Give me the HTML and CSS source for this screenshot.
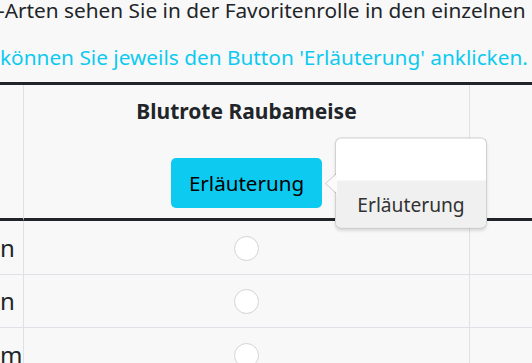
FILE: index.html
```html
<!DOCTYPE html>
<html lang="de">
<head>
    <meta charset="UTF-8">
    <meta name="viewport" content="width=device-width, initial-scale=1.0">
    <title>Favoritenrolle</title>
    <link rel="stylesheet" href="styles.css">
</head>
<body>
    <div class="page">
        <p class="lead-text">-Arten sehen Sie in der Favoritenrolle in den einzelnen</p>
        <p class="hint">können Sie jeweils den Button 'Erläuterung' anklicken.</p>

        <table class="species-table">
            <thead>
                <tr>
                    <th class="col-label"></th>
                    <th class="col-species">
                        <div class="species-name">Blutrote Raubameise</div>
                        <span class="btn-wrap">
                            <button class="btn-info">Erläuterung</button>
                            <div class="popover">
                                <div class="popover-arrow"></div>
                                <div class="popover-body"></div>
                                <div class="popover-header">Erläuterung</div>
                            </div>
                        </span>
                    </th>
                    <th class="col-rest"></th>
                </tr>
            </thead>
            <tbody>
                <tr>
                    <td class="col-label">n</td>
                    <td class="col-species"><input type="radio" name="r1" class="choice"></td>
                    <td class="col-rest"></td>
                </tr>
                <tr>
                    <td class="col-label">n</td>
                    <td class="col-species"><input type="radio" name="r2" class="choice"></td>
                    <td class="col-rest"></td>
                </tr>
                <tr>
                    <td class="col-label">m</td>
                    <td class="col-species"><input type="radio" name="r3" class="choice"></td>
                    <td class="col-rest"></td>
                </tr>
            </tbody>
        </table>
    </div>
</body>
</html>
```

FILE: styles.css
```css
html, body {
    margin: 0;
    padding: 0;
    overflow: hidden;
}
body {
    font-family: 'Noto Sans', 'Open Sans', sans-serif;
    background-color: #f8f8f8;
    color: #212529;
    width: 532px;
    height: 363px;
}
.page {
    width: 900px;
}
.lead-text,
.hint {
    font-size: 20.8px;
    line-height: 30px;
    white-space: nowrap;
    margin: 0;
}
.lead-text {
    margin-top: -5px;
    margin-left: -2px;
}
.hint {
    margin-top: 17px;
    color: #0dcaf0;
}
.species-table {
    margin-top: 10px;
    border-collapse: separate;
    border-spacing: 0;
    border-top: 3px solid #212529;
    table-layout: fixed;
    width: 700px;
}
.species-table th,
.species-table td {
    padding: 0;
    border-right: 1px solid #dee2e6;
    border-bottom: 1px solid #dee2e6;
    vertical-align: middle;
}
.species-table th {
    border-bottom: 3px solid #212529;
    height: 133px;
    vertical-align: top;
}
.species-table td {
    height: 52.5px;
}
.col-label {
    width: 23px;
    text-align: right;
    font-size: 24px;
    overflow: hidden;
}
td.col-label {
    width: 11px;
    padding-right: 12px;
    white-space: nowrap;
}
.col-species {
    width: 445px;
    text-align: center;
}
.species-name {
    font-size: 21px;
    line-height: 30px;
    font-weight: 700;
    margin-top: 11px;
    margin-bottom: 32px;
}
.btn-wrap {
    position: relative;
    display: inline-block;
}
.btn-info {
    font-family: inherit;
    font-size: 20.6px;
    line-height: 30px;
    padding: 10px 0;
    width: 151px;
    color: #000;
    background-color: #0dcaf0;
    border: 0;
    border-radius: 5px;
    cursor: pointer;
}
.popover {
    position: absolute;
    left: calc(100% + 13px);
    top: 50%;
    transform: translateY(-50%);
    width: 150px;
    background-color: #fff;
    border: 1px solid rgba(0, 0, 0, 0.18);
    border-radius: 6px;
    box-shadow: 0 2px 3px rgba(0, 0, 0, 0.12);
    z-index: 5;
    font-weight: 400;
}
.popover-arrow {
    position: absolute;
    left: -11px;
    top: 50%;
    margin-top: -10px;
    width: 11px;
    height: 20px;
}
.popover-arrow::before,
.popover-arrow::after {
    content: "";
    position: absolute;
    top: 0;
    border-style: solid;
    border-color: transparent;
    border-width: 10px 11px 10px 0;
}
.popover-arrow::before {
    left: 0;
    border-right-color: rgba(0, 0, 0, 0.2);
}
.popover-arrow::after {
    left: 1px;
    border-right-color: #fbfbfb;
}
.popover-body {
    height: 42px;
}
.popover-header {
    background-color: #f0f0f0;
    color: #333;
    font-size: 19.2px;
    line-height: 27px;
    padding: 10px 0;
    text-align: center;
    border-radius: 0 0 5px 5px;
}
.choice {
    appearance: none;
    -webkit-appearance: none;
    width: 25px;
    height: 25px;
    margin: 2px auto 0;
    display: block;
    background-color: #fff;
    border: 1px solid #d4d4d4;
    border-radius: 50%;
}
```
